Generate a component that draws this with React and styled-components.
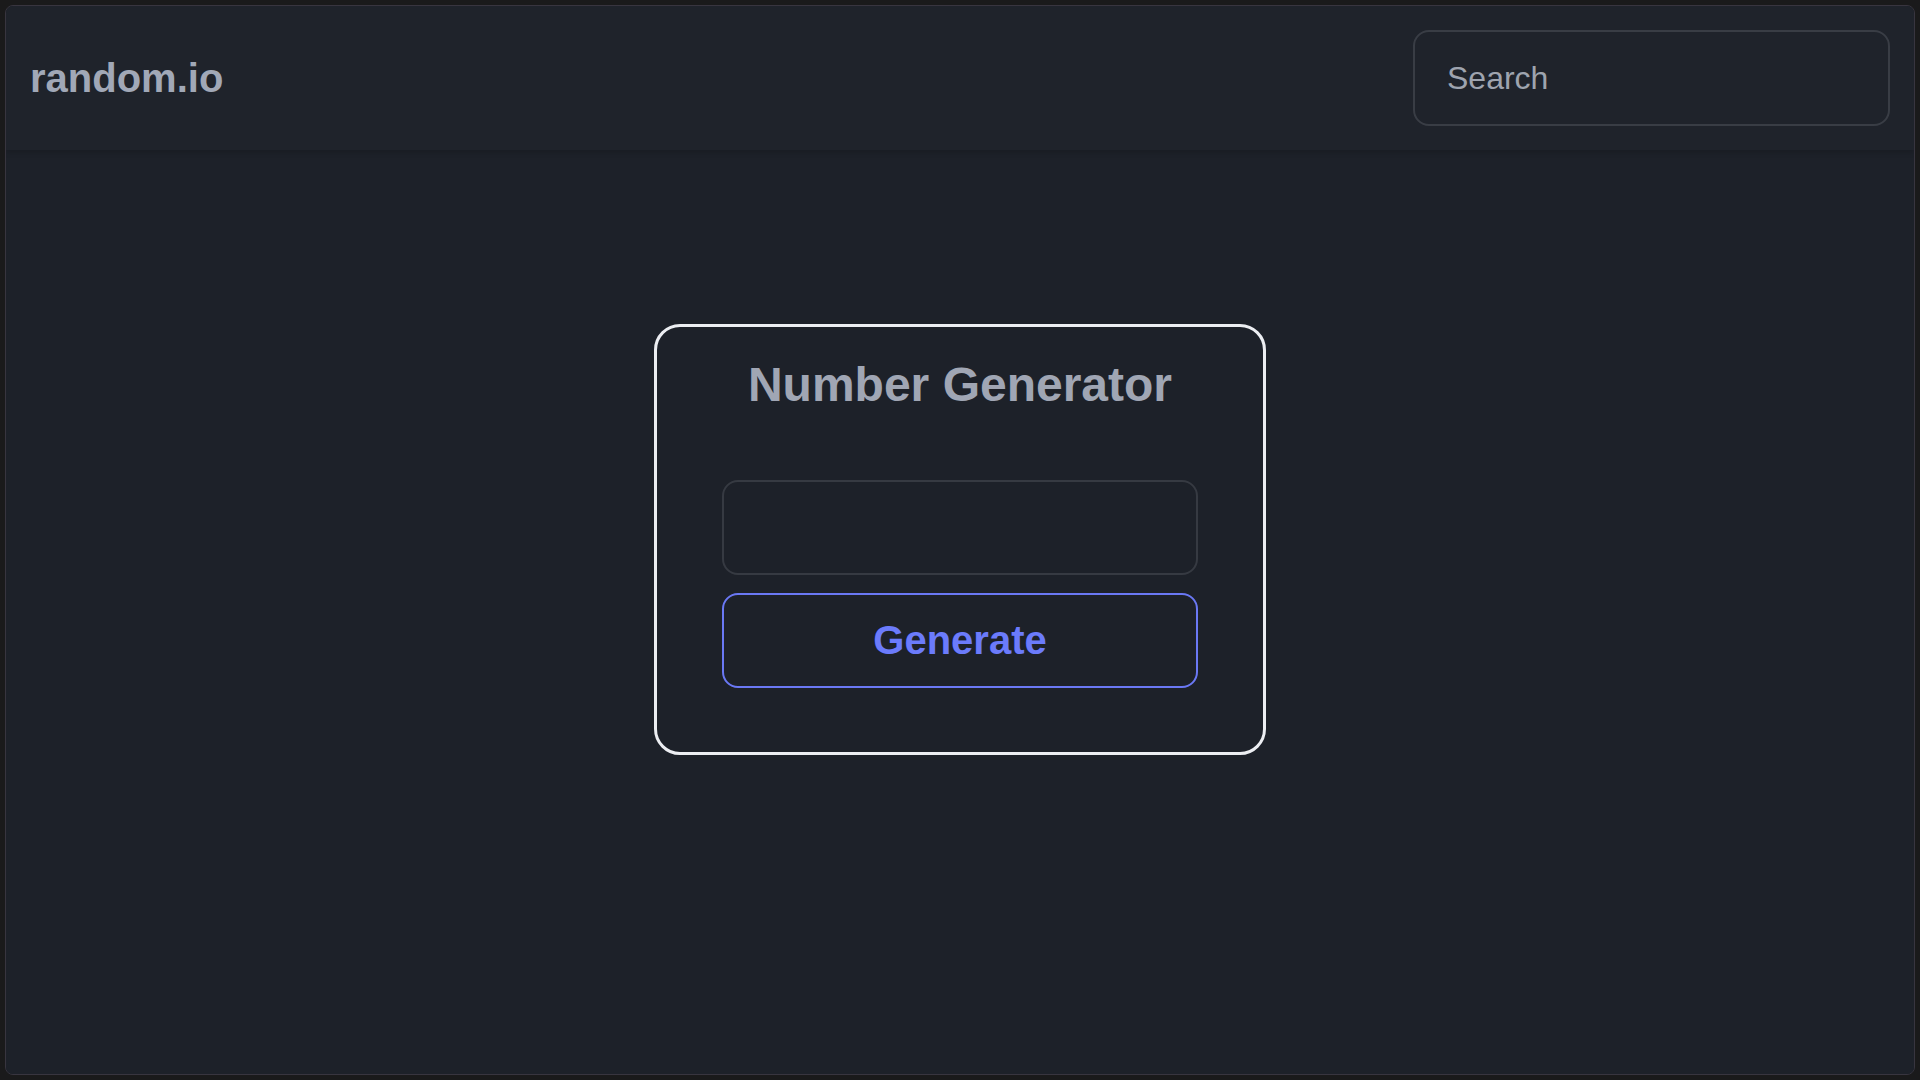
import React from 'react'
import styled, { createGlobalStyle } from 'styled-components';

const GlobalStyle = createGlobalStyle`
    * {
        box-sizing: border-box;
    }
    html, body {
        margin: 0;
        padding: 0;
        background: #1a1a1b;
        font-family: "Liberation Sans", Arial, sans-serif;
    }
`;

export default function App() {
    return (
        <>
            <GlobalStyle />
            <Frame>
                <Panel>
                    <Header>
                        <Logo>random.io</Logo>
                        <SearchInput placeholder='Search' />
                    </Header>

                    <Main>
                        <Card>
                            <Title>Number Generator</Title>
                            <NumberField type='text' readOnly />
                            <GenerateButton>Generate</GenerateButton>
                        </Card>
                    </Main>
                </Panel>
            </Frame>
        </>
    )
}

const Frame = styled.div`
    width: 100vw;
    height: 100vh;
    padding: 5px;
`;

const Panel = styled.div`
    height: 100%;
    display: flex;
    flex-direction: column;
    background-color: #1e222a;
    border: 1px solid #38353f;
    border-radius: 8px;
    overflow: hidden;
`;

const Header = styled.header`
    height: 144px;
    display: flex;
    align-items: center;
    justify-content: space-between;
    padding: 0 24px;
    background-color: #1f232b;
    box-shadow: 0 2px 6px rgba(0, 0, 0, 0.18);
    position: relative;
    z-index: 1;
`;

const Logo = styled.h1`
    margin: 0;
    font-size: 40px;
    font-weight: 700;
    color: #a1a8b7;
`;

const SearchInput = styled.input`
    width: 477px;
    height: 96px;
    padding: 0 32px;
    background: transparent;
    border: 2px solid #393d45;
    border-radius: 16px;
    font-family: inherit;
    font-size: 32px;
    color: #9ea4af;
    outline: none;

    &::placeholder {
        color: #9ea4af;
    }
`;

const Main = styled.main`
    flex: 1;
    display: flex;
    justify-content: center;
    align-items: flex-start;
    padding-top: 174px;
    background-color: #1d2129;
`;

const Card = styled.div`
    width: 612px;
    height: 431px;
    display: flex;
    flex-direction: column;
    align-items: center;
    padding: 29px 65px 0;
    border: 3px solid #eceef2;
    border-radius: 26px;
`;

const Title = styled.h2`
    margin: 0 0 66px;
    font-size: 48px;
    line-height: 58px;
    font-weight: 700;
    color: #a0a6b4;
`;

const NumberField = styled.input`
    width: 476px;
    height: 95px;
    margin-bottom: 18px;
    background: transparent;
    border: 2px solid #363a42;
    border-radius: 16px;
    outline: none;
    font-family: inherit;
    font-size: 40px;
    color: #a0a6b4;
    text-align: center;
`;

const GenerateButton = styled.button`
    width: 476px;
    height: 95px;
    background: transparent;
    border: 2px solid #6a78f4;
    border-radius: 16px;
    font-family: inherit;
    font-size: 40px;
    font-weight: 700;
    color: #6b7bfb;
    cursor: pointer;
`;
